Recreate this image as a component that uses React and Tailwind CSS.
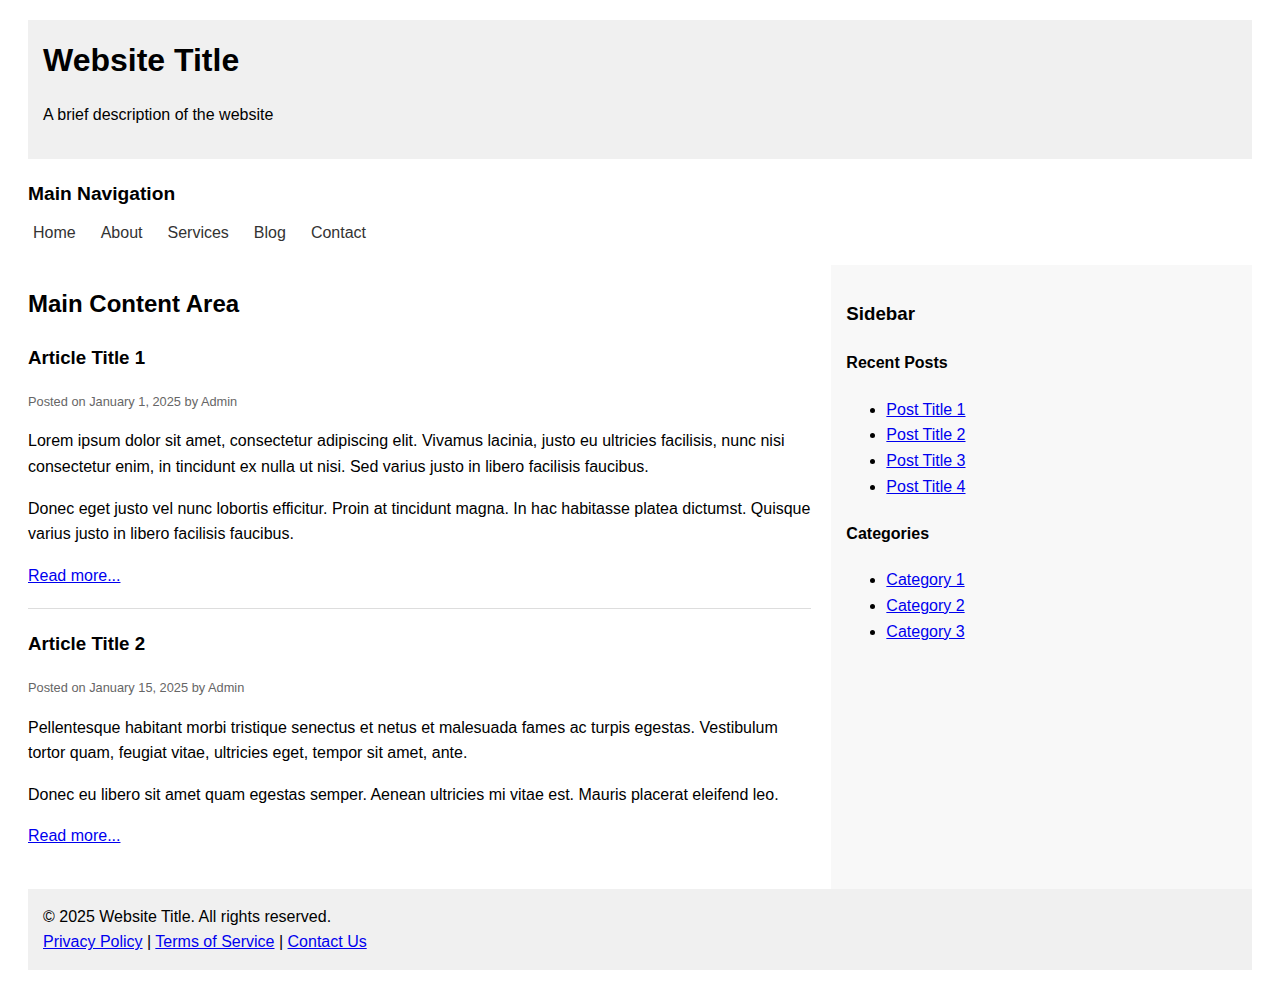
import React from "react";

const recentPosts = ["Post Title 1", "Post Title 2", "Post Title 3", "Post Title 4"];
const categories = ["Category 1", "Category 2", "Category 3"];
const navLinks = ["Home", "About", "Services", "Blog", "Contact"];

const articles = [
  {
    title: "Article Title 1",
    date: "January 1, 2025",
    paras: [
      "Lorem ipsum dolor sit amet, consectetur adipiscing elit. Vivamus lacinia, justo eu ultricies facilisis, nunc nisi consectetur enim, in tincidunt ex nulla ut nisi. Sed varius justo in libero facilisis faucibus.",
      "Donec eget justo vel nunc lobortis efficitur. Proin at tincidunt magna. In hac habitasse platea dictumst. Quisque varius justo in libero facilisis faucibus.",
    ],
  },
  {
    title: "Article Title 2",
    date: "January 15, 2025",
    paras: [
      "Pellentesque habitant morbi tristique senectus et netus et malesuada fames ac turpis egestas. Vestibulum tortor quam, feugiat vitae, ultricies eget, tempor sit amet, ante.",
      "Donec eu libero sit amet quam egestas semper. Aenean ultricies mi vitae est. Mauris placerat eleifend leo.",
    ],
  },
];

const Article = ({ article, last }) => {
  return (
    <article
      className={`pb-5 mb-5 ${last ? "" : "border-b border-[#ddd]"}`}
    >
      <h3 className="text-[18.72px] font-bold leading-[1.6] mt-[18.72px] mb-[18.72px]">
        {article.title}
      </h3>
      <p className="text-[12.8px] leading-[1.6] text-[#666] mb-4">
        Posted on {article.date} by Admin
      </p>
      {article.paras.map((p, i) => (
        <p key={i} className="text-base leading-[1.6] mb-4">
          {p}
        </p>
      ))}
      <p className="text-base leading-[1.6]">
        <a href="#" className="text-[#0000ee] underline">
          Read more...
        </a>
      </p>
    </article>
  );
};

const SideList = ({ items }) => (
  <ul className="list-disc pl-10 my-4">
    {items.map((item) => (
      <li key={item} className="text-base leading-[1.6]">
        <a href="#" className="text-[#0000ee] underline">
          {item}
        </a>
      </li>
    ))}
  </ul>
);

export default function App() {
  return (
    <div className="min-h-[990px] bg-white px-[28px] pt-5 text-black font-['Liberation_Sans',Arial,sans-serif] leading-[1.6]">
      <header className="bg-[#f0f0f0] p-[15px] flow-root">
        <h1 className="text-[32px] font-bold leading-[1.6]">Website Title</h1>
        <p className="text-base leading-[1.6] my-4">
          A brief description of the website
        </p>
      </header>

      <nav className="mt-5">
        <h2 className="text-[19.2px] font-bold leading-[1.6]">Main Navigation</h2>
        <ul className="flex mt-[10px]">
          {navLinks.map((link) => (
            <li key={link} className="mr-[15px] text-base leading-[1.6]">
              <a href="#" className="px-[5px] text-[#333]">
                {link}
              </a>
            </li>
          ))}
        </ul>
      </nav>

      <div className="flex gap-5 mt-5">
        <main className="w-[64%] flow-root">
          <h2 className="text-2xl font-bold leading-[1.6] mt-[19.92px] mb-[19.92px]">
            Main Content Area
          </h2>
          {articles.map((a, i) => (
            <Article key={a.title} article={a} last={i === articles.length - 1} />
          ))}
        </main>

        <aside className="flex-1 bg-[#f8f8f8] px-[15px] pt-[15px] flow-root">
          <h3 className="text-[18.72px] font-bold leading-[1.6] mt-[18.72px] mb-[18.72px]">
            Sidebar
          </h3>
          <h4 className="text-base font-bold leading-[1.6] my-[21.28px]">
            Recent Posts
          </h4>
          <SideList items={recentPosts} />
          <h4 className="text-base font-bold leading-[1.6] my-[21.28px]">
            Categories
          </h4>
          <SideList items={categories} />
        </aside>
      </div>

      <footer className="bg-[#f0f0f0] p-[15px] text-base leading-[1.6]">
        <p>© 2025 Website Title. All rights reserved.</p>
        <p>
          <a href="#" className="text-[#0000ee] underline">
            Privacy Policy
          </a>{" "}
          |{" "}
          <a href="#" className="text-[#0000ee] underline">
            Terms of Service
          </a>{" "}
          |{" "}
          <a href="#" className="text-[#0000ee] underline">
            Contact Us
          </a>
        </p>
      </footer>
    </div>
  );
}
